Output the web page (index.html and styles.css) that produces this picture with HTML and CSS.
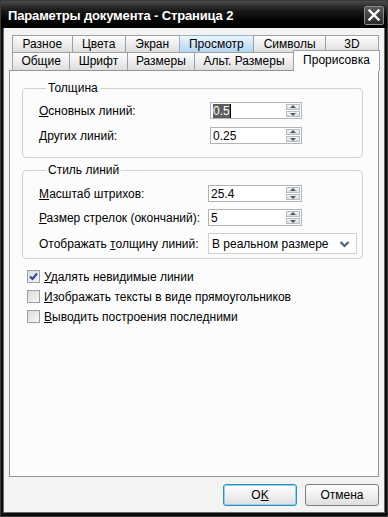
FILE: index.html
```
<!doctype html>
<html>
  <head>
    <meta charset="utf-8">
    <link rel="stylesheet" href="styles.css">
    <title>Параметры документа</title>
  </head>
  <body>
    <div class="window">
      <div class="titlebar">
        <span class="title">Параметры документа - Страница 2</span>
        <span class="close">
          <svg width="12" height="12" viewBox="0 0 12 12"><path d="M1.5 1.5 L10.5 10.5 M10.5 1.5 L1.5 10.5" stroke="#fff" stroke-width="2.4" stroke-linecap="square"/></svg>
        </span>
      </div>
      <div class="client">
        <div class="tabs">
          <div class="tabrow">
            <div class="tab">Разное</div>
            <div class="tab">Цвета</div>
            <div class="tab">Экран</div>
            <div class="tab hot">Просмотр</div>
            <div class="tab">Символы</div>
            <div class="tab tab-3d">3D</div>
          </div>
          <div class="tabrow second">
            <div class="tab">Общие</div>
            <div class="tab">Шрифт</div>
            <div class="tab">Размеры</div>
            <div class="tab">Альт. Размеры</div>
            <div class="tab active">Прорисовка</div>
          </div>
        </div>

        <div class="panel">
          <fieldset class="group g-thick">
            <legend>Толщина</legend>
            <label><u>О</u>сновных линий:</label>
            <div class="spin"><span class="value"><span class="sel">0.5</span><span class="caret"></span></span><span class="arrows"><span class="up"></span><span class="down"></span></span></div>
            <label><u>Д</u>ругих линий:</label>
            <div class="spin"><span class="value">0.25</span><span class="arrows"><span class="up"></span><span class="down"></span></span></div>
          </fieldset>

          <fieldset class="group g-style">
            <legend>Стиль линий</legend>
            <label><u>М</u>асштаб штрихов:</label>
            <div class="spin"><span class="value">25.4</span><span class="arrows"><span class="up"></span><span class="down"></span></span></div>
            <label><u>Р</u>азмер стрелок (окончаний):</label>
            <div class="spin"><span class="value">5</span><span class="arrows"><span class="up"></span><span class="down"></span></span></div>
            <label class="lbl-combo">Отображать <u>т</u>олщину линий:</label>
            <div class="combo">
              <span class="value">В реальном размере</span>
              <svg width="11" height="8" viewBox="0 0 11 8"><path d="M1.5 2 L5.5 6 L9.5 2" fill="none" stroke="#4c607a" stroke-width="2.2"/></svg>
            </div>
          </fieldset>

          <div class="checks">
            <div class="check"><span class="box on"><svg width="9" height="9" viewBox="0 0 9 9"><path d="M1 4.5 L3.5 7 L8 1.5" fill="none" stroke="#2144b8" stroke-width="2"/></svg></span><span><u>У</u>далять невидимые линии</span></div>
            <div class="check"><span class="box"></span><span><u>И</u>зображать тексты в виде прямоугольников</span></div>
            <div class="check"><span class="box"></span><span><u>В</u>ыводить построения последними</span></div>
          </div>
        </div>

        <div class="buttons">
          <button class="btn default">O<u>K</u></button>
          <button class="btn">Отмена</button>
        </div>
      </div>
    </div>
  </body>
</html>
```

FILE: styles.css
```
html, body {
  margin: 0;
  padding: 0;
  background: #000;
}
body {
  font-family: "Liberation Sans", Arial, sans-serif;
  font-size: 12px;
  color: #000;
}
.window {
  width: 388px;
  height: 517px;
  box-sizing: border-box;
  background: #0c0c0c;
  border: 1px solid #3a3a3a;
  display: flex;
  flex-direction: column;
}
.titlebar {
  height: 27px;
  display: flex;
  align-items: center;
  justify-content: space-between;
  padding: 0 3px 0 7px;
  background: linear-gradient(#4a4a4a, #1a1a1a 35%, #050505 70%, #000);
}
.title {
  color: #fff;
  font-weight: bold;
  font-size: 13px;
  letter-spacing: -0.15px;
  margin-top: 2px;
}
.close {
  width: 18px;
  height: 17px;
  display: flex;
  align-items: center;
  justify-content: center;
  border: 1px solid #8a8a8a;
  border-radius: 2px;
  background: linear-gradient(#5a5a5a, #2a2a2a);
  margin-top: 1px;
}
.client {
  flex: 1;
  margin: 0 2px 3px 2px;
  border-left: 1px solid #6a6a6a;
  border-right: 1px solid #6a6a6a;
  border-bottom: 1px solid #6a6a6a;
  background: #f3f3f3;
  display: flex;
  flex-direction: column;
}

/* tabs */
.tabs {
  margin: 7px 5px 0 8px;
}
.tabrow {
  display: flex;
  height: 18px;
}
.tabrow.second {
  height: 19px;
  margin-top: -1px;
  align-items: flex-end;
  margin-right: -1px;
}
.tab {
  flex: 1 1 auto;
  box-sizing: border-box;
  height: 100%;
  padding: 0 7px;
  margin-left: -1px;
  border: 1px solid #9aa2a6;
  background: linear-gradient(#fdfdfd, #efefef 45%, #dedede);
  text-align: center;
  line-height: 16px;
  white-space: nowrap;
}
.tab:first-child {
  margin-left: 0;
}
.tab.hot {
  border-color: #8fb3d6;
  background: linear-gradient(#eef6fd, #cfe5f7 50%, #b4d5ef);
}
.tab-3d {
  min-width: 54px;
}
.tab.active {
  position: relative;
  z-index: 2;
  height: 21px;
  flex: 0 0 87px;
  border-bottom: none;
  background: #fcfcfc;
  line-height: 18px;
}

/* panel */
.panel {
  margin: -1px 5px 0 5px;
  height: 407px;
  box-sizing: border-box;
  border: 1px solid #8e9699;
  background: #fcfcfc;
  padding: 10px 15px 0 12px;
}
.group {
  margin: 0;
  padding: 7px 0 0 16px;
  border: 1px solid #d3d3cb;
  border-radius: 4px;
  display: grid;
  align-items: center;
}
.group legend {
  padding: 0 2px;
  margin-left: 7px;
  line-height: 14px;
}
.g-thick {
  grid-template-columns: 171px 92px;
  row-gap: 8px;
  padding-bottom: 13px;
}
.g-style {
  grid-template-columns: 169px 94px 55px;
  row-gap: 7px;
  margin-top: 5px;
  padding-top: 8px;
  padding-bottom: 4px;
}
.g-style .spin {
  grid-column: 2;
}
.g-style label {
  grid-column: 1;
}
.g-style .combo {
  grid-column: 2 / 4;
  width: 149px;
}
label {
  white-space: nowrap;
}
.spin {
  box-sizing: border-box;
  height: 17px;
  border: 1px solid #aeb4b8;
  background: #fff;
  display: flex;
  align-items: center;
  justify-content: space-between;
  padding: 0 1px 0 2px;
}
.value {
  display: flex;
  align-items: center;
  line-height: 14px;
}
.sel {
  background: #5d5d5d;
  color: #fff;
}
.caret {
  width: 1px;
  height: 14px;
  background: #000;
}
.arrows {
  width: 14px;
  display: flex;
  flex-direction: column;
  gap: 1px;
}
.arrows span {
  height: 6px;
  box-sizing: border-box;
  border: 1px solid #b6bbc0;
  background: linear-gradient(#f4f4f4, #dcdcdc);
  position: relative;
}
.arrows span::after {
  content: "";
  position: absolute;
  left: 3px;
  border-left: 3px solid transparent;
  border-right: 3px solid transparent;
}
.arrows .up::after {
  top: 0;
  border-bottom: 3px solid #4d5c73;
}
.arrows .down::after {
  top: 1px;
  border-top: 3px solid #4d5c73;
}
.combo {
  box-sizing: border-box;
  height: 21px;
  border: 1px solid #cfd2d4;
  background: #fff;
  display: flex;
  align-items: center;
  justify-content: space-between;
  padding: 0 6px 0 3px;
}

/* checkboxes */
.checks {
  margin-top: 11px;
  margin-left: 5px;
  display: flex;
  flex-direction: column;
  gap: 7px;
}
.check {
  display: flex;
  align-items: center;
  gap: 4px;
  height: 13px;
}
.box {
  width: 13px;
  height: 13px;
  box-sizing: border-box;
  border: 1px solid #9a9fa3;
  background: linear-gradient(135deg, #dcdcdc, #f6f6f6);
  display: flex;
  align-items: center;
  justify-content: center;
}

/* buttons */
.buttons {
  flex: 1;
  display: flex;
  justify-content: flex-end;
  align-items: flex-start;
  gap: 8px;
  padding: 7px 5px 0 0;
}
.btn {
  width: 74px;
  height: 22px;
  font: inherit;
  color: #000;
  border: 1px solid #7c7c7c;
  border-radius: 3px;
  background: linear-gradient(#fefefe, #f0f0f0 50%, #dedede);
  padding: 0;
}
.btn.default {
  border-color: #2a8fc4;
  box-shadow: inset 0 0 0 1px #8fd3f0;
}
```
